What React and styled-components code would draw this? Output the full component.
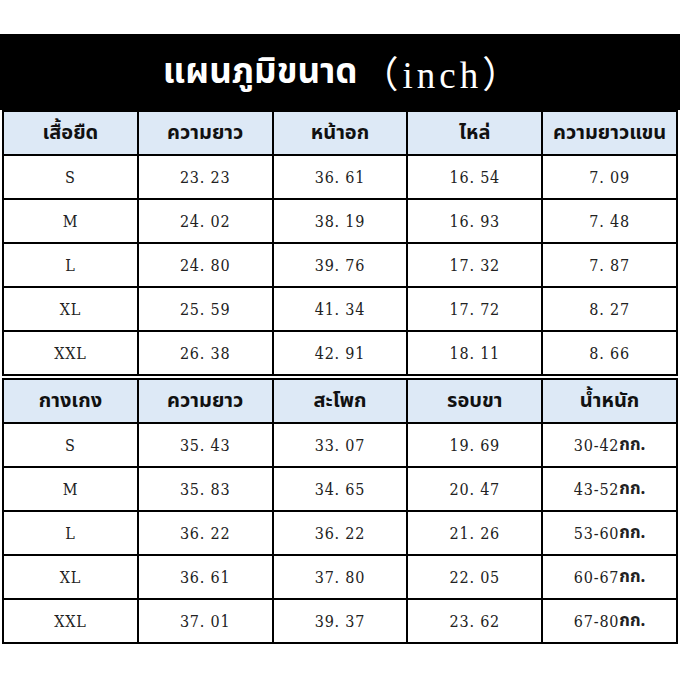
import styled, { createGlobalStyle } from "styled-components";

const GlobalStyle = createGlobalStyle`
  html, body {
    margin: 0;
    padding: 0;
    background: #fff;
  }
`;

const thai = `"Noto Sans Thai", "Noto Sans", "DejaVu Sans", sans-serif`;
const serif = `"DejaVu Serif Condensed", "DejaVu Serif", "Liberation Serif", serif`;

const Page = styled.div`
  width: 680px;
  height: 680px;
  padding-top: 34px;
  box-sizing: border-box;
  background: #fff;
`;

const TitleBand = styled.div`
  height: 76px;
  background: #000;
  color: #fff;
  display: flex;
  align-items: center;
  justify-content: center;
  padding-left: 6px;
`;

const TitleThai = styled.span`
  font-family: ${thai};
  font-weight: 700;
  font-size: 35px;
`;

const TitleUnit = styled.span`
  font-family: "Liberation Serif", "Noto Sans CJK SC", serif;
  font-weight: 400;
  font-size: 37px;
  letter-spacing: 4px;
  margin-left: 4px;
`;

const Grid = styled.div`
  display: grid;
  grid-template-columns: repeat(5, 1fr);
  grid-auto-rows: 42px;
  gap: 2px;
  padding: 2px;
  margin: ${(p) => (p.$second ? "2px 2px 0" : "0 2px")};
  background: #000;
`;

const Cell = styled.div`
  display: flex;
  align-items: center;
  justify-content: center;
  background: ${(p) => (p.$head ? "#dde9f6" : "#fff")};
  color: ${(p) => (p.$head ? "#111" : "#222")};
  font-family: ${(p) => (p.$head ? thai : serif)};
  font-weight: ${(p) => (p.$head ? 700 : 400)};
  font-size: ${(p) => (p.$head ? "20px" : "16px")};
  letter-spacing: ${(p) => (p.$head ? "0" : "0.8px")};
  white-space: nowrap;
`;

const Kg = styled.span`
  font-family: ${thai};
  font-weight: 700;
  font-size: 17px;
  letter-spacing: 0;
`;

const shirtHead = ["เสื้อยืด", "ความยาว", "หน้าอก", "ไหล่", "ความยาวแขน"];
const shirtRows = [
  ["S", "23.23", "36.61", "16.54", "7.09"],
  ["M", "24.02", "38.19", "16.93", "7.48"],
  ["L", "24.80", "39.76", "17.32", "7.87"],
  ["XL", "25.59", "41.34", "17.72", "8.27"],
  ["XXL", "26.38", "42.91", "18.11", "8.66"],
];

const pantsHead = ["กางเกง", "ความยาว", "สะโพก", "รอบขา", "น้ำหนัก"];
const pantsRows = [
  ["S", "35.43", "33.07", "19.69", "30-42"],
  ["M", "35.83", "34.65", "20.47", "43-52"],
  ["L", "36.22", "36.22", "21.26", "53-60"],
  ["XL", "36.61", "37.80", "22.05", "60-67"],
  ["XXL", "37.01", "39.37", "23.62", "67-80"],
];

// numbers in the source use a wide dot, so pad it a little
const spaced = (v) => v.replace(".", ". ");

const SizeTable = ({ head, rows, second, weight }) => (
  <Grid $second={second}>
    {head.map((h) => (
      <Cell $head key={h}>
        {h}
      </Cell>
    ))}
    {rows.map((r) =>
      r.map((v, i) => (
        <Cell key={r[0] + i}>
          {spaced(v)}
          {weight && i === 4 && <Kg>กก.</Kg>}
        </Cell>
      ))
    )}
  </Grid>
);

export default function App() {
  return (
    <Page>
      <GlobalStyle />
      <TitleBand>
        <TitleThai>แผนภูมิขนาด</TitleThai>
        <TitleUnit>（inch）</TitleUnit>
      </TitleBand>
      <SizeTable head={shirtHead} rows={shirtRows} />
      <SizeTable head={pantsHead} rows={pantsRows} second weight />
    </Page>
  );
}
